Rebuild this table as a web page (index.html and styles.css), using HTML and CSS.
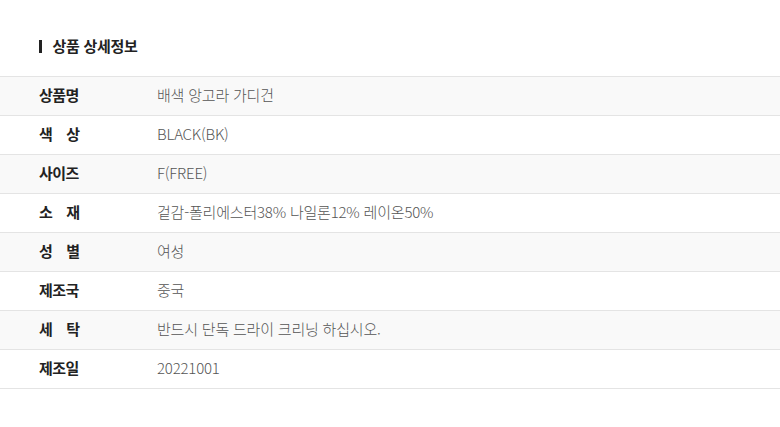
FILE: index.html
```html
<!DOCTYPE html>
<html lang="ko">
<head>
<meta charset="utf-8">
<link rel="stylesheet" href="styles.css">
</head>
<body>
<section class="detail">
  <h2 class="title">상품 상세정보</h2>
  <div class="table">
    <div class="row alt"><div class="label">상품명</div><div class="value">배색 앙고라 가디건</div></div>
    <div class="row"><div class="label spread">색 상</div><div class="value">BLACK(BK)</div></div>
    <div class="row alt"><div class="label">사이즈</div><div class="value">F(FREE)</div></div>
    <div class="row"><div class="label spread">소 재</div><div class="value">겉감-폴리에스터38% 나일론12% 레이온50%</div></div>
    <div class="row alt"><div class="label spread">성 별</div><div class="value">여성</div></div>
    <div class="row"><div class="label">제조국</div><div class="value">중국</div></div>
    <div class="row alt"><div class="label spread">세 탁</div><div class="value">반드시 단독 드라이 크리닝 하십시오.</div></div>
    <div class="row"><div class="label">제조일</div><div class="value">20221001</div></div>
  </div>
</section>
</body>
</html>
```

FILE: styles.css
```css
* { box-sizing: border-box; }
html, body { margin: 0; padding: 0; background: #fff; }
body {
  font-family: "Noto Sans CJK KR", "Noto Sans", sans-serif;
  color: #222;
}
.detail { width: 780px; }
.title {
  margin: 0 0 19px 0;
  padding: 35px 0 0 39px;
  font-size: 15px;
  font-weight: 700;
  line-height: 22px;
  letter-spacing: -0.3px;
  display: flex;
  align-items: center;
  gap: 11px;
}
.title::before {
  content: "";
  width: 2.5px;
  height: 13px;
  background: #222;
}
.table { border-top: 1px solid #e4e4e4; }
.row {
  display: flex;
  align-items: center;
  height: 39px;
  padding-bottom: 3px;
  border-bottom: 1px solid #e4e4e4;
}
.row.alt { background: #f9f9f9; }
.label {
  width: 157px;
  padding-left: 39px;
  font-size: 15px;
  font-weight: 700;
  color: #222;
  letter-spacing: -0.5px;
}
.label.spread {
  width: 80px;
  margin-right: 77px;
  padding-left: 39px;
  text-align: justify;
  text-align-last: justify;
  letter-spacing: 0;
}
.value {
  font-size: 15px;
  font-weight: 300;
  color: #555;
  letter-spacing: -0.2px;
}
```
